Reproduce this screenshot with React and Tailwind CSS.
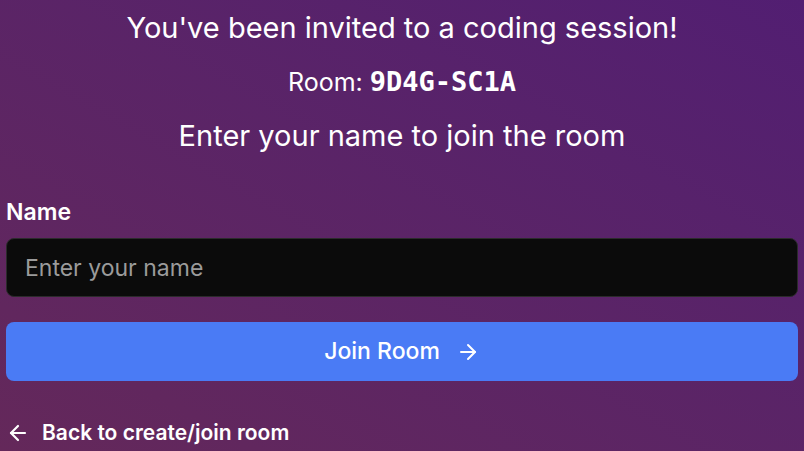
import React from 'react';
import { ArrowRight, ArrowLeft } from 'lucide-react';

export default function App() {
  return (
    <div
      className="min-h-screen w-full bg-gradient-to-tr from-[#64285a] to-[#521e72] text-white px-[6px]"
      style={{ fontFamily: 'Inter, "Noto Sans", sans-serif' }}
    >
      {/* ── Header ── */}
      <div className="text-center pt-[10px]">
        <h1 className="text-[29px] leading-[36px] font-normal">You've been invited to a coding session!</h1>
        <p className="mt-[20px] text-[25px] leading-[32px]">
          Room:{' '}
          <span className="font-bold text-[27px]" style={{ fontFamily: '"DejaVu Sans Mono", "Liberation Mono", monospace' }}>
            9D4G-SC1A
          </span>
        </p>
        <p className="mt-[20px] text-[29px] leading-[36px]">Enter your name to join the room</p>
      </div>

      {/* ── Form ── */}
      <div className="mt-[44px]">
        <label className="block text-[23px] leading-[28px] font-semibold mb-[12px]">Name</label>
        <input
          placeholder="Enter your name"
          className="w-full h-[59px] rounded-lg bg-[#0b0b0b] border border-[#2b2b2b] px-[18px] text-[23px] placeholder:text-[#9b9b9b] outline-none"
        />
        <button className="mt-[25px] w-full h-[59px] rounded-lg bg-[#4a7bf5] flex items-center justify-center gap-[16px] text-[23px] font-medium">
          Join Room <ArrowRight size={24} strokeWidth={2} />
        </button>
      </div>

      {/* ── Back ── */}
      <div className="mt-[38px] flex items-center gap-[12px] text-[21px] leading-[28px] font-semibold">
        <ArrowLeft size={24} strokeWidth={2.2} /> Back to create/join room
      </div>
    </div>
  );
}
